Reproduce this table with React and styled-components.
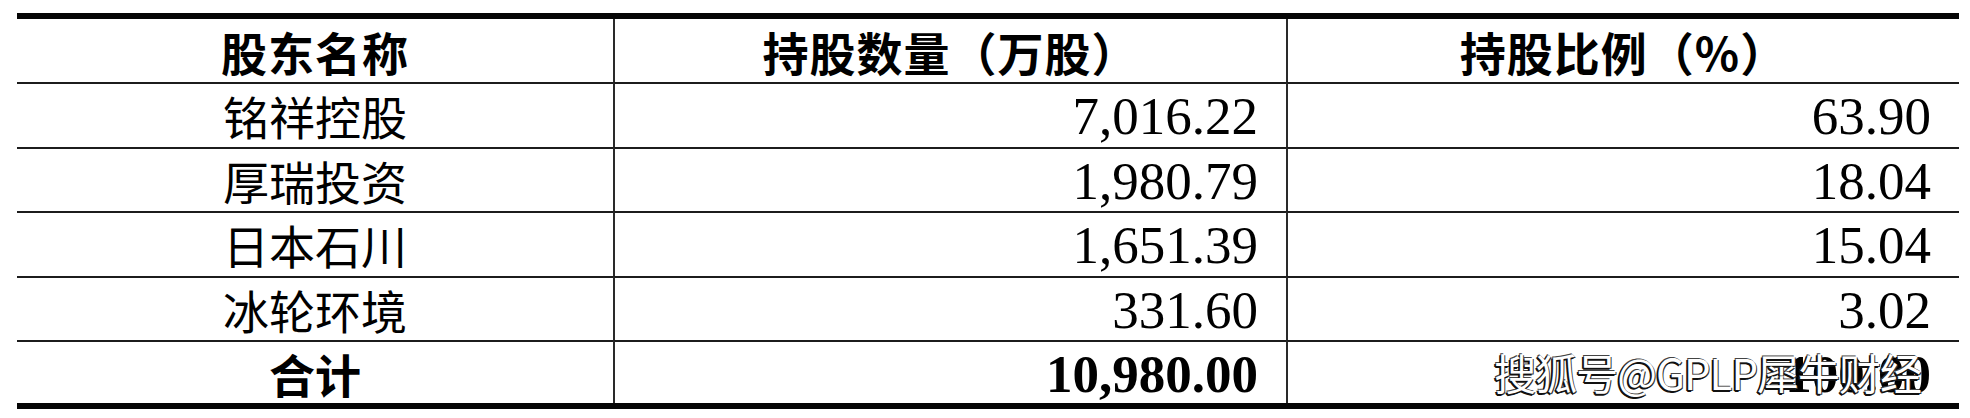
import styled, {createGlobalStyle} from "styled-components";

const GlobalStyle = createGlobalStyle`
  html, body {
    margin: 0;
    padding: 0;
    background: #ffffff;
  }
`;

const rows = [
  {name: "铭祥控股", amount: "7,016.22", ratio: "63.90"},
  {name: "厚瑞投资", amount: "1,980.79", ratio: "18.04"},
  {name: "日本石川", amount: "1,651.39", ratio: "15.04"},
  {name: "冰轮环境", amount: "331.60", ratio: "3.02"},
];

const Page = styled.div`
  width: 1970px;
  height: 418px;
  padding: 13px 0 0 17px;
  box-sizing: border-box;
  background: #fff;
`;

const Table = styled.div`
  width: 1942px;
  display: grid;
  grid-template-columns: 596px 673px 673px;
  grid-template-rows: 63px repeat(4, 64.5px) 63px;
  border-top: 6px solid #050505;
  border-bottom: 6px solid #050505;
  box-sizing: content-box;
`;

const Cell = styled.div`
  position: relative;
  display: flex;
  align-items: center;
  justify-content: ${(p) => (p.$align === "right" ? "flex-end" : "center")};
  padding: ${(p) => (p.$align === "right" ? "3px 28px 0 0" : "0")};
  box-sizing: border-box;
  border-top: ${(p) => (p.$first ? "none" : "2px solid #1c1c1c")};
  border-left: ${(p) => (p.$col > 0 ? "2px solid #2a2a2a" : "none")};
  color: #000;
  font-size: ${(p) => (p.$num ? "53px" : "46px")};
  font-family: ${(p) =>
    p.$num
      ? `"Liberation Serif", "Times New Roman", serif`
      : `"Noto Sans CJK SC", "Noto Sans", sans-serif`};
  font-weight: ${(p) => (p.$bold ? 700 : 400)};
  line-height: 1;
  white-space: nowrap;
`;

const HeadText = styled.span`
  letter-spacing: 1px;
`;

const Watermark = styled.span`
  position: absolute;
  right: 38px;
  top: 9px;
  font-family: "Noto Sans CJK SC", "Liberation Sans", sans-serif;
  font-size: 42px;
  font-weight: 400;
  letter-spacing: -1px;
  color: #ffffff;
  text-shadow:
    -2px 1px 0 #111,
    -1px 2px 0 #111,
    1px 1px 0 #333,
    -1px -1px 0 #444;
  pointer-events: none;
`;

export default function App() {
  return (
    <>
      <GlobalStyle />
      <Page>
        <Table>
          <Cell $first $col={0} $bold>
            <HeadText>股东名称</HeadText>
          </Cell>
          <Cell $first $col={1} $bold>
            <HeadText>持股数量（万股）</HeadText>
          </Cell>
          <Cell $first $col={2} $bold>
            <HeadText>持股比例（%）</HeadText>
          </Cell>

          {rows.map((row) => (
            <>
              <Cell key={row.name + "n"} $col={0}>
                {row.name}
              </Cell>
              <Cell key={row.name + "a"} $col={1} $num $align="right">
                {row.amount}
              </Cell>
              <Cell key={row.name + "r"} $col={2} $num $align="right">
                {row.ratio}
              </Cell>
            </>
          ))}

          <Cell $col={0} $bold>
            合计
          </Cell>
          <Cell $col={1} $num $bold $align="right">
            10,980.00
          </Cell>
          <Cell $col={2} $num $bold $align="right">
            100.00
            <Watermark>搜狐号@GPLP犀牛财经</Watermark>
          </Cell>
        </Table>
      </Page>
    </>
  );
}
